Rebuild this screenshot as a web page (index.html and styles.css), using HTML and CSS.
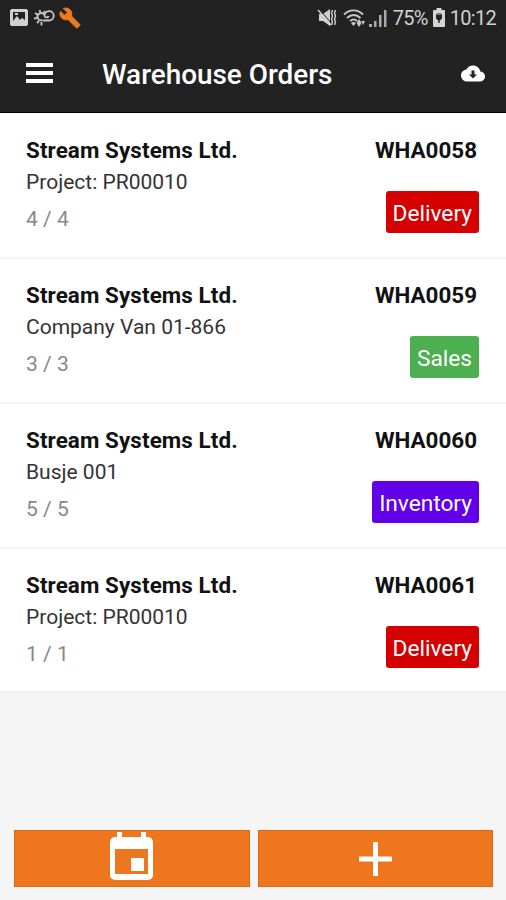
FILE: index.html
```html
<!DOCTYPE html>
<html lang="en">
<head>
    <meta charset="UTF-8">
    <meta name="viewport" content="width=device-width, initial-scale=1.0">
    <title>Warehouse Orders</title>
    <link rel="stylesheet" href="styles.css">
</head>
<body>
    <div class="screen">
        <!-- Status bar -->
        <div class="status-bar">
            <div class="status-left">
                <svg class="icon-picture" width="18" height="17" viewBox="0 0 18 17">
                    <path fill="#d0d0d0" fill-rule="evenodd" d="M1 0h16v1h1v15h-1v1H1v-1H0V1h1zM3 3v9l4-5 3 4 2-2 3 2V3zM5 4h3v2H5z" />
                </svg>
                <svg class="icon-weather" width="21" height="17" viewBox="0 0 21 17" fill="none" stroke="#c4c4c4" stroke-width="1.9">
                    <path d="M10 5.500A3.600 3.600 0 1 0 8.500 11" />
                    <path d="M1 4l2.500 1.500M0 9.500l3-.5M3 14l2-2M7.500 13v3.500M5.500 1l1 2.500M11 2l-1.500 2" />
                    <path d="M9 11.500h6a4.700 4.700 0 1 0-4.500-6c-.5 3 3.500 4 4 1.500" />
                </svg>
                <svg class="icon-wrench" width="22" height="22" viewBox="0 0 24 24">
                    <path fill="#ee7a20" stroke="#ee7a20" stroke-width="1" d="M22.700 19l-9.100-9.100c.9-2.300.4-5-1.500-6.900-2-2-5-2.400-7.400-1.300L9 6 6 9 1.600 4.700C.4 7.100.9 10.100 2.900 12.100c1.900 1.900 4.600 2.400 6.900 1.500l9.100 9.100c.4.4 1 .4 1.400 0l2.300-2.300c.5-.4.5-1.100.1-1.400z" />
                </svg>
            </div>
            <div class="status-right">
                <svg class="icon-mute" width="20" height="19" viewBox="0 0 20 19">
                    <path fill="#d0d0d0" d="M2 6h4l7-5v17l-7-5H2z" />
                    <path stroke="#222" stroke-width="1" d="M3 2l12 14" />
                    <path stroke="#d0d0d0" stroke-width="1.500" d="M1 2l13 15" />
                    <path fill="none" stroke="#d0d0d0" stroke-width="1.400" d="M15.500 2l-1 3 1 3-1 3 1 3-1 3M18.500 2l-1 3 1 3-1 3 1 3-1 3" />
                </svg>
                <svg class="icon-wifi" width="23" height="18" viewBox="0 0 23 18" fill="none" stroke="#c8c8c8" stroke-width="1.800">
                    <path d="M1 5.500c5.500-5.500 13.500-5.500 19 0M4 9c4-4 9.500-4 13.500 0M7 12.200c2.300-2.300 5-2.300 7 0" />
                    <path fill="#c8c8c8" stroke="none" d="M8 14c2-1.500 3-1.500 5 0l-2.500 3zM14 13l2-3 2 3v2l-2 3-2-3zM18 12h4l-2 4z" />
                </svg>
                <svg class="icon-signal" width="18" height="18" viewBox="0 0 18 18" fill="#aaa">
                    <path d="M0 15h3v3H0zM5 12h2.500v6H5zM10 6h2.500v12H10zM15 1h2.500v17H15z" />
                </svg>
                <span class="percent">75%</span>
                <svg class="icon-battery" width="12" height="19" viewBox="0 0 12 19">
                    <path fill="#d4d4d4" d="M3.500 0h5v2H11a1 1 0 0 1 1 1v15a1 1 0 0 1-1 1H1a1 1 0 0 1-1-1V3a1 1 0 0 1 1-1h2.500z" />
                    <path fill="#222" d="M3 6l1.500 1V5h1v2h1V5h1v2L9 6v3c0 2-1 3-2.300 3.300V15H5.300v-2.700C4 12 3 11 3 9z" />
                </svg>
                <span class="clock">10:12</span>
            </div>
        </div>

        <!-- Toolbar -->
        <header class="toolbar">
            <svg class="menu" width="27" height="20" viewBox="0 0 27 20" fill="#fff">
                <path d="M0 0h27v4H0zM0 8h27v4H0zM0 16h27v4H0z" />
            </svg>
            <h1 class="title">Warehouse Orders</h1>
            <svg class="cloud" width="24" height="17" viewBox="0 4 24 16">
                <path fill="#fff" d="M19.350 10.040C18.670 6.590 15.640 4 12 4 9.110 4 6.600 5.640 5.350 8.040 2.340 8.360 0 10.910 0 14c0 3.310 2.690 6 6 6h13c2.760 0 5-2.240 5-5 0-2.640-2.050-4.780-4.650-4.960zM16 13l-4 4-4-4h2.500V9h3v4z" />
            </svg>
        </header>

        <!-- Orders -->
        <main class="orders">
            <section class="order">
                <div class="info">
                    <h2>Stream Systems Ltd.</h2>
                    <p class="reference">Project: PR00010</p>
                    <p class="count">4 / 4</p>
                </div>
                <div class="side">
                    <span class="number">WHA0058</span>
                    <span class="badge delivery">Delivery</span>
                </div>
            </section>
            <section class="order">
                <div class="info">
                    <h2>Stream Systems Ltd.</h2>
                    <p class="reference">Company Van 01-866</p>
                    <p class="count">3 / 3</p>
                </div>
                <div class="side">
                    <span class="number">WHA0059</span>
                    <span class="badge sales">Sales</span>
                </div>
            </section>
            <section class="order">
                <div class="info">
                    <h2>Stream Systems Ltd.</h2>
                    <p class="reference">Busje 001</p>
                    <p class="count">5 / 5</p>
                </div>
                <div class="side">
                    <span class="number">WHA0060</span>
                    <span class="badge inventory">Inventory</span>
                </div>
            </section>
            <section class="order">
                <div class="info">
                    <h2>Stream Systems Ltd.</h2>
                    <p class="reference">Project: PR00010</p>
                    <p class="count">1 / 1</p>
                </div>
                <div class="side">
                    <span class="number">WHA0061</span>
                    <span class="badge delivery">Delivery</span>
                </div>
            </section>
        </main>

        <!-- Bottom buttons -->
        <footer class="actions">
            <button type="button" aria-label="Calendar">
                <svg class="calendar" width="43" height="48" viewBox="0 0 43 48">
                    <path fill="#fff" fill-rule="evenodd" d="M7 0h5v5h19V0h5v5h2a5 5 0 0 1 5 5v33a5 5 0 0 1-5 5H5a5 5 0 0 1-5-5V10a5 5 0 0 1 5-5h2zM5 17v25h33V17z" />
                    <path fill="#fff" d="M21 26h13v13H21z" />
                </svg>
            </button>
            <button type="button" aria-label="Add">
                <svg width="33" height="34" viewBox="0 0 33 34">
                    <path fill="#fff" d="M14 0h5v14.500h14v5H19V34h-5V19.500H0v-5h14z" />
                </svg>
            </button>
        </footer>
    </div>
</body>
</html>
```
FILE: styles.css
```css
body {
    font-family: Roboto, sans-serif;
    margin: 0;
    background-color: #f5f5f5;
}

.screen {
    display: flex;
    flex-direction: column;
    height: 900px;
    box-sizing: border-box;
    overflow: hidden;
}

.status-bar {
    display: flex;
    justify-content: space-between;
    align-items: center;
    height: 35px;
    padding: 0 10px;
    background-color: #222;
    color: #d0d0d0;
    font-size: 20px;
    letter-spacing: -0.7px;
}

.status-left,
.status-right {
    display: flex;
    align-items: center;
}

.icon-weather {
    margin-left: 6px;
}

.icon-wrench {
    margin-left: 4px;
}

.icon-wifi {
    margin-left: 6px;
}

.icon-signal {
    margin-left: 3px;
}

.percent {
    margin: 0 5px 0 6px;
}

.clock {
    margin-left: 5px;
}

.toolbar {
    display: flex;
    align-items: center;
    height: 77px;
    padding: 0 21px 0 26px;
    background-color: #222;
    border-bottom: 1px solid #000;
    color: #fff;
}

.menu {
    margin-bottom: 1px;
}

.title {
    flex: 1;
    margin: 2px 0 0 49px;
    font-size: 27.9px;
    font-weight: 500;
}

.orders {
    padding-top: 1px;
    background-color: #fff;
}

.order {
    display: flex;
    justify-content: space-between;
    height: 145px;
    box-sizing: border-box;
    padding: 21px 27px 0 26px;
    background-color: #fff;
    border-bottom: 2px solid #f5f5f5;
}

.order:last-child {
    height: 144px;
    border-bottom-color: #f0f0f0;
}

h2,
.number {
    margin: 0;
    font-size: 22.4px;
    line-height: 30px;
    font-weight: 700;
    letter-spacing: 0.1px;
    color: #111;
}

.number {
    margin-right: 2px;
    letter-spacing: 0;
}

p {
    margin: 0;
}

.reference {
    margin-top: 2px;
    font-size: 21px;
    line-height: 30px;
    color: #333;
}

.count {
    margin-top: 7px;
    font-size: 21px;
    line-height: 30px;
    color: #888;
}

.side {
    display: flex;
    flex-direction: column;
    align-items: flex-end;
}

.badge {
    margin-top: 26px;
    height: 42px;
    padding: 0 7px;
    border-radius: 3px;
    color: #fff;
    font-size: 22.7px;
    line-height: 45px;
}

.delivery {
    background-color: #d50000;
}

.sales {
    background-color: #4caf50;
}

.inventory {
    background-color: #6200ea;
}

.actions {
    display: flex;
    gap: 8px;
    margin-top: auto;
    padding: 0 13px 13px 14px;
}

.actions button {
    display: flex;
    flex: 1;
    align-items: center;
    justify-content: center;
    height: 57px;
    padding: 0;
    border: 1px solid #de6a10;
    background-color: #ee761e;
}

.calendar {
    margin-bottom: 5px;
}
```
